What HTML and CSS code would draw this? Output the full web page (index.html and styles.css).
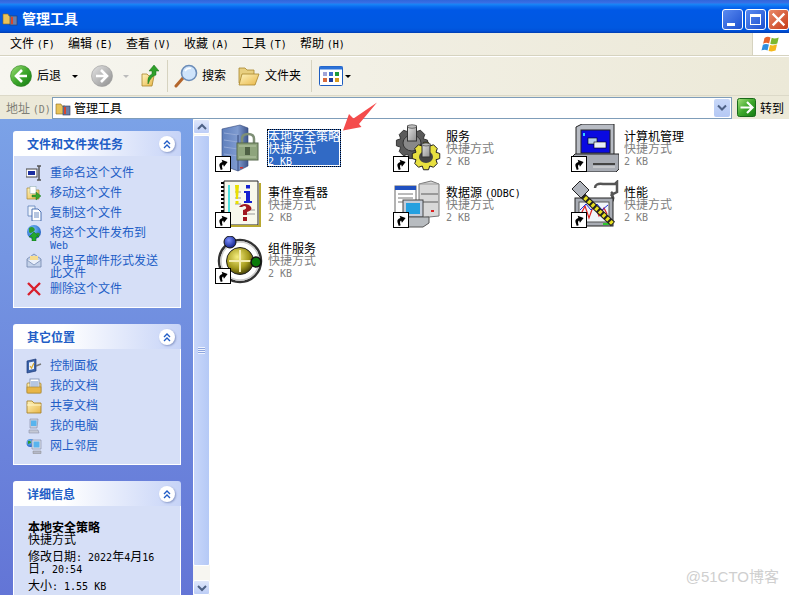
FILE: index.html
```html
<!DOCTYPE html>
<html lang="zh">
<head>
<meta charset="utf-8">
<title>管理工具</title>
<link rel="stylesheet" href="styles.css">
</head>
<body>
<svg class="defs" width="0" height="0" aria-hidden="true">
  <defs>
    <linearGradient id="gGreen" x1="0" y1="0" x2="1" y2="1"><stop offset="0" stop-color="#a6e27c"/><stop offset=".5" stop-color="#3ea82c"/><stop offset="1" stop-color="#137a12"/></linearGradient>
    <linearGradient id="gGray" x1="0" y1="0" x2="1" y2="1"><stop offset="0" stop-color="#e4e4e4"/><stop offset="1" stop-color="#8e8e8e"/></linearGradient>
    <linearGradient id="gFolder" x1="0" y1="0" x2="1" y2="1"><stop offset="0" stop-color="#fff4bd"/><stop offset="1" stop-color="#e8b648"/></linearGradient>
    <linearGradient id="gSteel" x1="0" y1="0" x2="1" y2="0"><stop offset="0" stop-color="#5f7fbc"/><stop offset=".6" stop-color="#7f9bd0"/><stop offset="1" stop-color="#3f568c"/></linearGradient>
    <radialGradient id="gBall" cx=".4" cy=".35" r=".7"><stop offset="0" stop-color="#f6ee80"/><stop offset=".6" stop-color="#a59a1c"/><stop offset="1" stop-color="#3a3606"/></radialGradient>
    <radialGradient id="gBlue" cx=".4" cy=".35" r=".7"><stop offset="0" stop-color="#7d90ff"/><stop offset="1" stop-color="#0a1a80"/></radialGradient>
    <radialGradient id="gGlobe" cx=".4" cy=".35" r=".7"><stop offset="0" stop-color="#7fc8ff"/><stop offset="1" stop-color="#1a5ac0"/></radialGradient>
    <symbol id="shortcut" viewBox="0 0 16 16">
      <rect x=".5" y=".5" width="15" height="15" fill="#fff" stroke="#000"/>
      <path d="M4 13 V9 Q4 6 8 6 V3.5 L13 7.5 L8 11 V8.5 Q6 8.5 6 13Z" fill="#000" transform="rotate(-18 8 8)"/>
    </symbol>
    <symbol id="gear" viewBox="0 0 24 24">
      <path d="M10 1h4l1 3 3-1 3 3-1 3 3 1v4l-3 1 1 3-3 3-3-1-1 3h-4l-1-3-3 1-3-3 1-3-3-1v-4l3-1-1-3 3-3 3 1z"/>
    </symbol>
  </defs>
</svg>

<div class="window">
  <header class="titlebar">
    <svg class="ti" viewBox="0 0 16 16"><path d="M1 4h5l1 2h3v8H1z" fill="#e8c35a" stroke="#8a6a20" stroke-width=".6"/><rect x="8" y="6" width="7" height="9" fill="#6b7fa8" stroke="#2c3a5c" stroke-width=".6"/><rect x="9" y="7" width="2" height="7" fill="#d8452c"/></svg>
    <span class="title-text">管理工具</span>
    <div class="winbtns">
      <div class="wb"><span class="wb-min"></span></div>
      <div class="wb"><span class="wb-max"></span></div>
      <div class="wb wb-close"><svg viewBox="0 0 21 21" class="wb-x"><path d="M5 5l11 11M16 5L5 16" stroke="#fff" stroke-width="2.6" stroke-linecap="square"/></svg></div>
    </div>
  </header>

  <div class="menurow">
    <nav class="menu">
      <span class="mi">文件 <span class="lat">(F)</span></span>
      <span class="mi">编辑 <span class="lat">(E)</span></span>
      <span class="mi">查看 <span class="lat">(V)</span></span>
      <span class="mi">收藏 <span class="lat">(A)</span></span>
      <span class="mi">工具 <span class="lat">(T)</span></span>
      <span class="mi">帮助 <span class="lat">(H)</span></span>
    </nav>
    <div class="logo">
      <svg viewBox="0 0 20 20" class="flag">
        <path d="M3 4q3-2 6-.5L7.6 9.4q-3-1.4-6 .3z" fill="#e8632c"/>
        <path d="M10.2 3.8q3 1.4 7-.4l-1.4 6q-3.6 1.6-7 .4z" fill="#7cb82f"/>
        <path d="M1.4 10.8q3-1.6 6-.2L6 16.4q-3-1.4-6 .2z" fill="#2f8fe0"/>
        <path d="M8.5 11q3.2 1 7-.4l-1.4 6q-3.6 1.4-7 .4z" fill="#f4b81c"/>
      </svg>
    </div>
  </div>

  <div class="toolbar">
    <svg class="tb-round" viewBox="0 0 22 22"><circle cx="11" cy="11" r="10.5" fill="url(#gGreen)" stroke="#2a7a20" stroke-width=".6"/><path d="M12 5l-6 6 6 6M6.5 11H17" fill="none" stroke="#fff" stroke-width="2.6"/></svg>
    <span class="tb-label back-label">后退</span>
    <span class="caret back-caret"></span>
    <svg class="tb-round fwd" viewBox="0 0 22 22"><circle cx="11" cy="11" r="10.5" fill="url(#gGray)" stroke="#999" stroke-width=".6"/><path d="M10 5l6 6-6 6M15.5 11H5" fill="none" stroke="#fff" stroke-width="2.6"/></svg>
    <span class="caret caret-off"></span>
    <svg class="tb-up" viewBox="0 0 18 22"><path d="M1 9h5l2 2h5l-2 10H1z" fill="url(#gFolder)" stroke="#a8852c" stroke-width=".8"/><path d="M7 19q-1-8 4-10V6H8l5-6 5 6h-3v4q-5 1-8 9z" fill="#2fa02a" stroke="#17701a" stroke-width=".5"/></svg>
    <span class="sep sep-a"></span>
    <svg class="tb-search" viewBox="0 0 24 24"><path d="M2 22l7-8" stroke="#b4662c" stroke-width="3" stroke-linecap="round"/><circle cx="15" cy="9" r="7.5" fill="#cfe4fb" stroke="#6c8db8" stroke-width="1.6"/><path d="M11 7q2-3 6-2.6" stroke="#fff" stroke-width="1.5" fill="none"/></svg>
    <span class="tb-label search-label">搜索</span>
    <svg class="tb-folder" viewBox="0 0 22 20"><path d="M1 2h6l2 2h7v13H1z" fill="#e8cf80" stroke="#a8852c" stroke-width=".8"/><path d="M4 8h17l-4 11H1z" fill="url(#gFolder)" stroke="#a8852c" stroke-width=".8"/></svg>
    <span class="tb-label folder-label">文件夹</span>
    <span class="sep sep-b"></span>
    <svg class="tb-views" viewBox="0 0 24 20"><rect x=".5" y=".5" width="23" height="19" rx="1" fill="#fff" stroke="#1c5cc0"/><rect x=".5" y=".5" width="23" height="3" fill="#2c72d8"/><rect x="4" y="6" width="4" height="4" fill="#a0a4d8"/><rect x="10" y="6" width="4" height="4" fill="#3c70d0"/><rect x="16" y="6" width="4" height="4" fill="#1c9a3c"/><rect x="4" y="12" width="4" height="4" fill="#d86a3c"/><rect x="10" y="12" width="4" height="4" fill="#1c3c9c"/><rect x="16" y="12" width="4" height="4" fill="#d89a1c"/></svg>
    <span class="caret views-caret"></span>
  </div>

  <div class="addrbar">
    <span class="addr-label">地址 <span class="lat">(D)</span></span>
    <div class="addr-input">
      <svg class="addr-ico" viewBox="0 0 16 16"><path d="M1 4h5l1 2h3v8H1z" fill="#e8c35a" stroke="#8a6a20" stroke-width=".6"/><rect x="8" y="6" width="7" height="9" fill="#6b7fa8" stroke="#2c3a5c" stroke-width=".6"/><rect x="9" y="7" width="2" height="7" fill="#d8452c"/></svg>
      <span class="addr-text">管理工具</span>
      <span class="addr-drop"><svg viewBox="0 0 10 8" class="chev-d"><path d="M1 1.500l4 4 4-4" fill="none" stroke="#4d6185" stroke-width="2"/></svg></span>
    </div>
    <svg class="go-ico" viewBox="0 0 19 19"><rect x=".5" y=".5" width="18" height="18" rx="2" fill="url(#gGreen)" stroke="#1a6a1a"/><path d="M10 4l5.500 5.500L10 15M15 9.500H3.500" fill="none" stroke="#fff" stroke-width="2.2"/></svg>
    <span class="go-text">转到</span>
  </div>

  <main class="main">
    <aside class="sidebar">
      <section class="panel">
        <div class="phead"><span class="ptitle">文件和文件夹任务</span><span class="pcollapse"><svg viewBox="0 0 10 10" class="dbl"><path d="M2 5l3-3 3 3M2 9l3-3 3 3" fill="none" stroke="#215dc6" stroke-width="1.400"/></svg></span></div>
        <ul class="pbody">
          <li class="task"><svg class="ti16" viewBox="0 0 16 16"><rect x="0" y="4" width="11" height="8" fill="#fff" stroke="#444"/><rect x="2" y="6" width="7" height="4" fill="#1c2fa0"/><path d="M11 1h4M11 15h4M13 1v14" stroke="#555" stroke-width="1.500"/></svg><a>重命名这个文件</a></li>
          <li class="task"><svg class="ti16" viewBox="0 0 16 16"><path d="M1 3h5l1 2h6v9H1z" fill="url(#gFolder)" stroke="#a8852c" stroke-width=".7"/><rect x="4" y="1.500" width="6" height="7" fill="#fff" stroke="#8aa" stroke-width=".5"/><path d="M6 10h4V7l5 4-5 4v-3H6z" fill="#3aa52c" stroke="#1a701a" stroke-width=".4"/></svg><a>移动这个文件</a></li>
          <li class="task"><svg class="ti16" viewBox="0 0 16 16"><path d="M2 1h7v10H2z" fill="#eef3fb" stroke="#5b7fb8" stroke-width=".8"/><path d="M6 4h6l3 3v9H6z" fill="#fff" stroke="#3a62a8" stroke-width=".9"/><path d="M8 8h5M8 10h5M8 12h5" stroke="#6c8cc0"/></svg><a>复制这个文件</a></li>
          <li class="task"><svg class="ti16" viewBox="0 0 16 16"><circle cx="8" cy="7" r="7" fill="url(#gGlobe)"/><path d="M3 3q3-2 5 0t-1 4-4 0zM10 8q3-1 4 1l-2 3z" fill="#2c9a2c"/><path d="M8 7l5 5h-3v4H6v-4H3z" fill="#22a82c" stroke="#0e6a14" stroke-width=".5"/></svg><a>将这个文件发布到 <span class="lat">Web</span></a></li>
          <li class="task"><svg class="ti16" viewBox="0 0 16 16"><path d="M1 6l7-5 7 5v8H1z" fill="#c4d2ea" stroke="#6e83ac" stroke-width=".8"/><rect x="4" y="3" width="8" height="5" fill="#f5dc90"/><path d="M1 7l7 5 7-5" fill="#eaf0fa" stroke="#6e83ac" stroke-width=".7"/></svg><a>以电子邮件形式发送此文件</a></li>
          <li class="task"><svg class="ti16" viewBox="0 0 16 16"><path d="M2 2l12 12M14 2L2 14" stroke="#d81e2c" stroke-width="2.400"/></svg><a>删除这个文件</a></li>
        </ul>
      </section>

      <section class="panel">
        <div class="phead"><span class="ptitle">其它位置</span><span class="pcollapse"><svg viewBox="0 0 10 10" class="dbl"><path d="M2 5l3-3 3 3M2 9l3-3 3 3" fill="none" stroke="#215dc6" stroke-width="1.400"/></svg></span></div>
        <ul class="pbody">
          <li class="task"><svg class="ti16" viewBox="0 0 16 16"><path d="M1 3l9-2v12l-9 2z" fill="#3a62a8" stroke="#1c3a78" stroke-width=".7"/><path d="M3 4.500l5-1v7.500l-5 1z" fill="#eaf0fa"/><path d="M4 8l1.500 2L8 5" stroke="#d8a82c" fill="none" stroke-width="1.200"/><path d="M10 8l5-2" stroke="#777" stroke-width="1.500"/></svg><a>控制面板</a></li>
          <li class="task"><svg class="ti16" viewBox="0 0 16 16"><rect x="1" y="5" width="14" height="10" rx="1" fill="url(#gFolder)" stroke="#a8852c" stroke-width=".8"/><rect x="4" y="1" width="9" height="10" fill="#fff" stroke="#7a8cae" stroke-width=".8"/><path d="M5 4h7M5 6h7M5 8h7" stroke="#6d8ec4"/><rect x="1" y="9" width="14" height="6" fill="#e8b648" stroke="#a8852c" stroke-width=".6"/></svg><a>我的文档</a></li>
          <li class="task"><svg class="ti16" viewBox="0 0 16 16"><path d="M1 3h5l2 2h7v10H1z" fill="url(#gFolder)" stroke="#a8852c" stroke-width=".9"/><path d="M1 7h14" stroke="#fff6c8"/></svg><a>共享文档</a></li>
          <li class="task"><svg class="ti16" viewBox="0 0 16 16"><path d="M4 1h8l-1 9H4z" fill="#c8cfe0" stroke="#8e94ac" stroke-width=".7"/><rect x="5" y="2.500" width="5.500" height="5.500" fill="#58b4ee"/><path d="M3 12h9l1 3H3z" fill="#c4c8d4" stroke="#8e94ac" stroke-width=".6"/></svg><a>我的电脑</a></li>
          <li class="task"><svg class="ti16" viewBox="0 0 16 16"><circle cx="4.500" cy="5" r="4" fill="url(#gGlobe)"/><path d="M2 3q3-1 3 2l-3 1z" fill="#2c9a2c"/><path d="M6 2h9v9H6z" fill="#d8dde8" stroke="#8e94ac" stroke-width=".7"/><rect x="7.500" y="3.500" width="6" height="6" fill="#58b4ee"/><path d="M7 13h8v2.500H7z" fill="#b4b8c8" stroke="#888" stroke-width=".5"/></svg><a>网上邻居</a></li>
        </ul>
      </section>

      <section class="panel panel-last">
        <div class="phead"><span class="ptitle">详细信息</span><span class="pcollapse"><svg viewBox="0 0 10 10" class="dbl"><path d="M2 5l3-3 3 3M2 9l3-3 3 3" fill="none" stroke="#215dc6" stroke-width="1.400"/></svg></span></div>
        <div class="details">
          <div class="d-name">本地安全策略</div>
          <div>快捷方式</div>
          <div class="d-gap">修改日期<span class="lat">: 2022</span>年<span class="lat">4</span>月<span class="lat">16</span> 日<span class="lat">, 20:54</span></div>
          <div class="d-gap">大小<span class="lat">: 1.55 KB</span></div>
        </div>
      </section>
    </aside>

    <div class="scrollbar">
      <span class="sb-btn"><svg viewBox="0 0 10 8" class="chev-d"><path d="M1 6l4-4 4 4" fill="none" stroke="#4d6185" stroke-width="2"/></svg></span>
      <span class="sb-thumb"><span class="grip"></span></span>
      <span class="sb-track"></span>
      <span class="sb-btn"><svg viewBox="0 0 10 8" class="chev-d"><path d="M1 2l4 4 4-4" fill="none" stroke="#4d6185" stroke-width="2"/></svg></span>
    </div>

    <div class="files">
      <article class="item">
        <div class="icon">
          <svg viewBox="0 0 48 48" class="big"><path d="M7 5l18-4 8 3v38l-10 5-16-6z" fill="url(#gSteel)" stroke="#33477a" stroke-width=".6"/><path d="M9 9l14 2M9 16l14 2M9 23l14 2M9 30l14 2" stroke="#93a9d6"/><path d="M23 11v36" stroke="#33477a"/><rect x="25" y="43" width="3" height="1.500" fill="#c33"/><path d="M27 20v-5q0-5 6-5t6 5v5" fill="none" stroke="#7e8f76" stroke-width="2.500"/><rect x="22" y="19" width="21" height="17" fill="#8ea47c" stroke="#56684c"/><path d="M24 22h17M24 33h17" stroke="#b7c7a6"/><rect x="30" y="23" width="5" height="8" fill="#4e6044"/></svg>
          <svg class="sc"><use href="#shortcut"/></svg>
        </div>
        <div class="info sel"><div>本地安全策略</div><div>快捷方式</div><div><span class="lat">2 KB</span></div></div>
      </article>
      <article class="item">
        <div class="icon">
          <svg viewBox="0 0 48 48" class="big">
            <use href="#gear" x="2" y="2" width="34" height="34" fill="#5a5a5a" stroke="#222" stroke-width=".6"/>
            <ellipse cx="19" cy="19" rx="9" ry="8" fill="#888" stroke="#333"/>
            <rect x="14.500" y="2" width="9" height="15" fill="url(#gGray)" stroke="#333"/>
            <ellipse cx="19" cy="2.500" rx="4.500" ry="1.800" fill="#bbb" stroke="#333" stroke-width=".6"/>
            <use href="#gear" x="18" y="17" width="30" height="30" fill="#e8e040" stroke="#222" stroke-width=".8"/>
            <ellipse cx="33" cy="33" rx="7" ry="6" fill="#444"/>
            <rect x="29" y="20" width="8" height="13" fill="url(#gGray)" stroke="#333"/>
            <ellipse cx="33" cy="20.500" rx="4" ry="1.500" fill="#bbb" stroke="#333" stroke-width=".6"/>
          </svg>
          <svg class="sc"><use href="#shortcut"/></svg>
        </div>
        <div class="info"><div class="nm">服务</div><div class="gr">快捷方式</div><div class="gr"><span class="lat">2 KB</span></div></div>
      </article>
      <article class="item">
        <div class="icon">
          <svg viewBox="0 0 48 48" class="big"><path d="M5 3l6-3h32v30l-5 4H5z" fill="#b8bcc4" stroke="#222"/><rect x="10" y="6" width="29" height="23" fill="#0a0ae0" stroke="#222"/><rect x="12" y="9" width="2" height="3" fill="#3cf"/><rect x="17" y="14" width="9" height="6" fill="#b4d0ec" stroke="#000" stroke-width=".6"/><rect x="23" y="18" width="12" height="6" fill="#e8f0f8" stroke="#000" stroke-width=".6"/><path d="M0 34l4-4h44v15l-3 3H0z" fill="#a8acb4" stroke="#222"/><path d="M22 40h22" stroke="#444" stroke-width="2"/><path d="M22 43h22" stroke="#e0e0e0"/></svg>
          <svg class="sc"><use href="#shortcut"/></svg>
        </div>
        <div class="info"><div class="nm">计算机管理</div><div class="gr">快捷方式</div><div class="gr"><span class="lat">2 KB</span></div></div>
      </article>

      <article class="item">
        <div class="icon">
          <svg viewBox="0 0 48 48" class="big"><path d="M9 1h34v44H9z" fill="#f8f8ec" stroke="#222"/><path d="M44 3h2v44H11v-2h33z" fill="#b8a830"/><path d="M9 3h-3M9 7h-3M9 11h-3M9 15h-3M9 19h-3M9 23h-3M9 27h-3M9 31h-3" stroke="#000" stroke-width="2"/><path d="M14 5v36" stroke="#4ce0e0" stroke-width="2"/><path d="M20 12h6M20 18h6M20 24h6M32 30h8M32 34h8" stroke="#999"/><path d="M20 5l1 14h2l1-14z" fill="#eae000"/><rect x="20.500" y="21" width="3" height="3" fill="#eae000"/><rect x="31" y="5" width="4" height="3.500" fill="#1420d0"/><path d="M29 11h6v10h2v2h-8v-2h2v-8h-2z" fill="#1420d0"/><path d="M24 27q2-3 6-3t6 3-4 5v3h-4v-5q4-1 3-3t-4 0z" fill="#a01820"/><rect x="28" y="37" width="4" height="4" fill="#a01820"/></svg>
          <svg class="sc"><use href="#shortcut"/></svg>
        </div>
        <div class="info"><div class="nm">事件查看器</div><div class="gr">快捷方式</div><div class="gr"><span class="lat">2 KB</span></div></div>
      </article>
      <article class="item">
        <div class="icon">
          <svg viewBox="0 0 48 48" class="big"><path d="M26 4l12-3 8 3v32l-20 2z" fill="#d8d8d8" stroke="#777"/><path d="M26 4h20" stroke="#999"/><path d="M28 14h17M28 22h17" stroke="#999" stroke-width="2"/><rect x="38" y="30" width="3" height="2" fill="#d22"/><rect x="2" y="6" width="21" height="28" fill="#fff" stroke="#666"/><rect x="2" y="6" width="21" height="4" fill="#2050c0"/><path d="M5 14h15M5 18h15M5 22h15" stroke="#777"/><rect x="10" y="20" width="20" height="17" fill="#c4ccd8" stroke="#444"/><rect x="13" y="23" width="14" height="11" fill="#24a0e0"/><path d="M4 37h32v6l-6 4H4z" fill="#b8bcc0" stroke="#555"/></svg>
          <svg class="sc"><use href="#shortcut"/></svg>
        </div>
        <div class="info"><div class="nm">数据源 <span class="lat">(ODBC)</span></div><div class="gr">快捷方式</div><div class="gr"><span class="lat">2 KB</span></div></div>
      </article>
      <article class="item">
        <div class="icon">
          <svg viewBox="0 0 48 48" class="big"><path d="M24 8q0-5 8-4h12l2-2v10l-4 2-2-2" fill="none" stroke="#555" stroke-width="2.500"/><path d="M40 14q4 4 0 8" fill="none" stroke="#555" stroke-width="3"/><rect x="4" y="18" width="38" height="28" fill="#a8acb4" stroke="#222"/><rect x="8" y="22" width="30" height="20" fill="#f0f4f8" stroke="#555"/><path d="M9 36l5-10 4 12 5-14 5 12 5-8 3 6" fill="none" stroke="#e02020" stroke-width="1.200"/><path d="M9 30l6-6 5 6 6-6 5 6 6-5" fill="none" stroke="#2030e0"/><rect x="32" y="43" width="6" height="2" fill="#2ec82e"/><path d="M10 14l32 30" stroke="#222" stroke-width="6"/><path d="M10 14l32 30" stroke="#e8e020" stroke-width="4" stroke-dasharray="3 2"/><path d="M1 9l8-8 9 9-8 8z" fill="#b0b4bc" stroke="#222"/></svg>
          <svg class="sc"><use href="#shortcut"/></svg>
        </div>
        <div class="info"><div class="nm">性能</div><div class="gr">快捷方式</div><div class="gr"><span class="lat">2 KB</span></div></div>
      </article>

      <article class="item">
        <div class="icon">
          <svg viewBox="0 0 48 48" class="big"><circle cx="25" cy="25" r="21" fill="none" stroke="#333" stroke-width="2.500"/><circle cx="25" cy="25" r="19" fill="none" stroke="#ccc" stroke-width="1.500"/><circle cx="25" cy="25" r="13.500" fill="url(#gBall)" stroke="#222"/><path d="M25 14v22M14 25h22" stroke="#f4ecb0" stroke-width="2"/><circle cx="15" cy="6" r="6" fill="url(#gBlue)" stroke="#111"/><circle cx="41" cy="26" r="5" fill="#0a7a0a" stroke="#111" stroke-width="1.500"/></svg>
          <svg class="sc"><use href="#shortcut"/></svg>
        </div>
        <div class="info"><div class="nm">组件服务</div><div class="gr">快捷方式</div><div class="gr"><span class="lat">2 KB</span></div></div>
      </article>
    </div>

    <svg class="arrow" viewBox="0 0 36 30"><path d="M1 28.500L7 12l4.500 4.500L35 .5 17 22l2.500 3z" fill="#f44c4c"/></svg>
    <span class="watermark">@51CTO博客</span>
  </main>
</div>
</body>
</html>
```

FILE: styles.css
```css
* { box-sizing: border-box; }
html, body { margin: 0; padding: 0; height: 100%; overflow: hidden; }
body {
  font-family: "Noto Sans CJK SC", "Liberation Sans", sans-serif;
  font-size: 12px;
  line-height: 12px;
  color: #000;
  background: #fff;
}
.defs { position: absolute; }
.lat { font-family: "DejaVu Sans Mono", "Liberation Mono", monospace; font-size: 10px; line-height: 0; }

.window { display: flex; flex-direction: column; width: 789px; height: 595px; }

/* Title bar */
.titlebar {
  height: 33px;
  flex: none;
  display: flex;
  align-items: center;
  padding: 5px 0 0 2px;
  background: linear-gradient(#2f66dc 0, #3a6fe6 3px, #1a86f6 4px, #0a6af0 7px, #0058e6 10px, #0058e0 28px, #0050d8 31px, #003cb0 33px);
}
.ti { width: 16px; height: 16px; margin: -2px 4px 0 0; }
.title-text { font-size: 14px; line-height: 16px; font-weight: 700; color: #fff; margin-top: -2px; }
.winbtns { margin-left: auto; display: flex; gap: 2px; padding-top: 1px; }
.wb {
  width: 21px; height: 21px;
  border: 1px solid #fff;
  border-radius: 3px;
  background: linear-gradient(135deg, #5a8af0, #1c50d0);
  position: relative;
  display: flex;
}
.wb-min { width: 8px; height: 3px; background: #fff; margin: auto 0 3px 4px; }
.wb-max { width: 11px; height: 11px; border: 1px solid #fff; border-top-width: 3px; margin: auto; }
.wb-close { background: linear-gradient(135deg, #e88a6a, #c83c18); }
.wb-x { width: 19px; height: 19px; }

/* Menu */
.menurow { height: 23px; flex: none; display: flex; background: linear-gradient(90deg, #f5f3ec, #ece9d8); border-bottom: 1px solid #d6d3c0; }
.menu { flex: 1; display: flex; padding: 0 0 2px 10px; align-items: center; border-right: 1px solid #d6d3c0; }
.mi { width: 58px; white-space: nowrap; }
.logo { width: 36px; flex: none; background: #fff; display: flex; align-items: center; justify-content: center; }
.flag { width: 21px; height: 20px; }

/* Toolbar */
.toolbar {
  height: 40px;
  flex: none;
  display: flex;
  align-items: center;
  padding-left: 10px;
  border-top: 1px solid #fff;
  border-bottom: 1px solid #dcd9c8;
  background: linear-gradient(90deg, #f7f6f0, #ece9d8);
}
.tb-round { width: 22px; height: 22px; flex: none; }
.tb-label { white-space: nowrap; margin-top: -2px; }
.back-label { margin-left: 5px; }
.caret { width: 0; height: 0; border: 3px solid transparent; border-top: 3px solid #000; border-bottom: 0; flex: none; }
.back-caret { margin-left: 11px; }
.fwd { margin-left: 13px; }
.caret-off { border-top-color: #bbb; margin-left: 10px; }
.tb-up { width: 18px; height: 22px; margin-left: 12px; flex: none; }
.sep { width: 1px; height: 32px; background: #d6d3c0; flex: none; }
.sep-a { margin-left: 8px; }
.tb-search { width: 24px; height: 24px; margin-left: 6px; flex: none; }
.search-label { margin-left: 4px; }
.tb-folder { width: 22px; height: 20px; margin-left: 12px; flex: none; }
.folder-label { margin-left: 5px; }
.sep-b { margin-left: 10px; }
.tb-views { width: 24px; height: 20px; margin-left: 7px; flex: none; }
.views-caret { margin-left: 2px; }

/* Address bar */
.addrbar { height: 23px; flex: none; display: flex; align-items: center; background: #ece9d8; padding-left: 6px; }
.addr-label { color: #7f7f76; width: 46px; white-space: nowrap; }
.addr-input {
  width: 680px; height: 22px;
  align-self: flex-end;
  background: #fff;
  border: 1px solid #7f9db9;
  display: flex;
  align-items: center;
  padding-left: 2px;
}
.addr-ico { width: 16px; height: 16px; flex: none; }
.addr-text { margin-left: 3px; }
.addr-drop {
  margin-left: auto; margin-right: 1px;
  width: 16px; height: 18px;
  background: linear-gradient(#c8d8f8, #b4c8f4);
  border-radius: 2px;
  display: flex; align-items: center; justify-content: center;
}
.chev-d { width: 10px; height: 8px; }
.go-ico { width: 19px; height: 19px; margin-left: 5px; flex: none; }
.go-text { margin-left: 4px; white-space: nowrap; }

/* Main */
.main { flex: 1; min-height: 0; display: flex; position: relative; }

.sidebar {
  width: 193px; flex: none;
  padding: 12px 12px 0 13px;
  display: flex; flex-direction: column; gap: 16px;
  background: linear-gradient(#7ba2e7, #6375d6);
  overflow: hidden;
}
.panel { flex: none; }
.panel-last { flex: 1; }
.phead {
  height: 25px;
  display: flex; align-items: center;
  padding: 0 6px 0 14px;
  border-radius: 3px 3px 0 0;
  background: linear-gradient(90deg, #fff 30%, #c6d3f7);
}
.ptitle { font-weight: 700; color: #215dc6; }
.pcollapse {
  margin-left: auto;
  width: 16px; height: 16px;
  border-radius: 50%;
  background: #fff;
  box-shadow: 1px 1px 2px #8a9ac8;
  display: flex; align-items: center; justify-content: center;
}
.dbl { width: 10px; height: 10px; }
.pbody {
  list-style: none;
  margin: 0;
  padding: 6px 0 9px 12px;
  background: #d6dff7;
  border: 1px solid #fff;
  border-top: 0;
}
.task { display: flex; gap: 8px; padding-top: 4px; min-height: 20px; }
.ti16 { width: 16px; height: 16px; flex: none; margin-top: -1px; }
.task a { color: #215dc6; width: 110px; }
.details { padding: 15px 0 20px 14px; background: #d6dff7; border: 1px solid #fff; border-top: 0; border-bottom: 0; height: 100%; }
.d-name { font-weight: 700; }
.d-gap { margin-top: 5px; width: 130px; }

/* Scrollbar */
.scrollbar { width: 17px; flex: none; display: flex; flex-direction: column; background: #f7f6f1; }
.sb-btn {
  height: 15px; flex: none;
  background: linear-gradient(#dfe7fb, #bccdf6);
  border: 1px solid #fff;
  border-radius: 2px;
  display: flex; align-items: center; justify-content: center;
}
.sb-thumb {
  height: 431px; flex: none;
  margin-top: 1px;
  background: linear-gradient(90deg, #c9d7fa, #b5c9f6);
  border: 1px solid #fff;
  border-radius: 2px;
  display: flex; align-items: center; justify-content: center;
}
.grip { width: 7px; height: 7px; background: repeating-linear-gradient(#eef3fe 0 1px, #8ea6e0 1px 2px); }
.sb-track { flex: 1; }

/* File area */
.files {
  flex: 1;
  padding: 5px 0 0 5px;
  display: grid;
  grid-template-columns: repeat(3, 178px);
  grid-auto-rows: 56px;
  align-content: start;
  background: #fff;
}
.item { display: flex; gap: 4px; }
.icon { width: 48px; height: 48px; position: relative; flex: none; }
.big { width: 48px; height: 48px; display: block; }
.sc { position: absolute; left: 0; bottom: 0; width: 16px; height: 16px; }
.info { margin-top: 5px; height: 38px; border: 1px solid transparent; white-space: nowrap; align-self: flex-start; }
.nm { color: #000; }
.gr { color: #808080; }
.sel {
  color: #fff;
  width: 74px;
  background: #316ac5;
  box-shadow: inset 0 0 0 1px #fff;
  outline: 1px dotted #000;
  outline-offset: -1px;
}

.arrow { position: absolute; left: 342px; top: -17px; width: 36px; height: 30px; }
.watermark {
  position: absolute;
  right: 10px; bottom: 10px;
  font-family: "Liberation Sans", "Noto Sans CJK SC", sans-serif;
  font-size: 15px;
  line-height: 16px;
  color: #cfcfcf;
}
```
